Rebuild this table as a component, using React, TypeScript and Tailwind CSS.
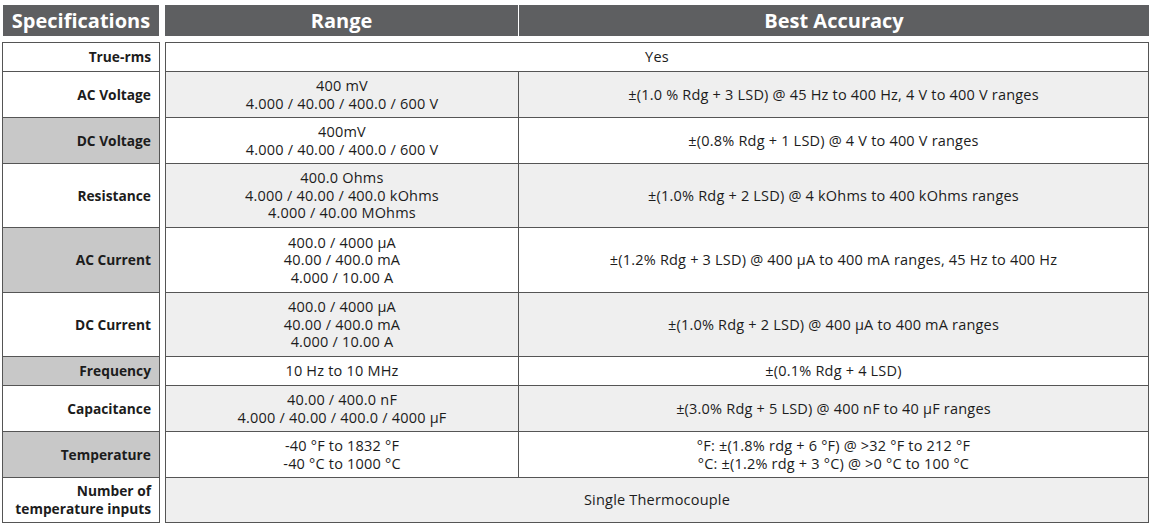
import React from 'react'

type Row = {
    label: React.ReactNode
    range?: string[]
    accuracy?: string[]
    span?: string
    h: string
    leftBg: string
    rightBg: string
}

const rows: Row[] = [
    { label: 'True-rms', span: 'Yes', h: 'h-[30px] border-t', leftBg: 'bg-white', rightBg: 'bg-white' },
    { label: 'AC Voltage', range: ['400 mV', '4.000 / 40.00 / 400.0 / 600 V'], accuracy: ['±(1.0 % Rdg + 3 LSD) @ 45 Hz to 400 Hz, 4 V to 400 V ranges'], h: 'h-[46px]', leftBg: 'bg-white', rightBg: 'bg-[#efefef]' },
    { label: 'DC Voltage', range: ['400mV', '4.000 / 40.00 / 400.0 / 600 V'], accuracy: ['±(0.8% Rdg + 1 LSD) @ 4 V to 400 V ranges'], h: 'h-[46px]', leftBg: 'bg-[#c8c8c8]', rightBg: 'bg-white' },
    { label: 'Resistance', range: ['400.0 Ohms', '4.000 / 40.00 / 400.0 kOhms', '4.000 / 40.00 MOhms'], accuracy: ['±(1.0% Rdg + 2 LSD) @ 4 kOhms to 400 kOhms ranges'], h: 'h-[64px]', leftBg: 'bg-white', rightBg: 'bg-[#efefef]' },
    { label: 'AC Current', range: ['400.0 / 4000 µA', '40.00 / 400.0 mA', '4.000 / 10.00 A'], accuracy: ['±(1.2% Rdg + 3 LSD) @ 400 µA to 400 mA ranges, 45 Hz to 400 Hz'], h: 'h-[65px]', leftBg: 'bg-[#c8c8c8]', rightBg: 'bg-white' },
    { label: 'DC Current', range: ['400.0 / 4000 µA', '40.00 / 400.0 mA', '4.000 / 10.00 A'], accuracy: ['±(1.0% Rdg + 2 LSD) @ 400 µA to 400 mA ranges'], h: 'h-[64px]', leftBg: 'bg-white', rightBg: 'bg-[#efefef]' },
    { label: 'Frequency', range: ['10 Hz to 10 MHz'], accuracy: ['±(0.1% Rdg + 4 LSD)'], h: 'h-[29px]', leftBg: 'bg-[#c8c8c8]', rightBg: 'bg-white' },
    { label: 'Capacitance', range: ['40.00 / 400.0 nF', '4.000 / 40.00 / 400.0 / 4000 µF'], accuracy: ['±(3.0% Rdg + 5 LSD) @ 400 nF to 40 µF ranges'], h: 'h-[46px]', leftBg: 'bg-white', rightBg: 'bg-[#efefef]' },
    { label: 'Temperature', range: ['-40 °F to 1832 °F', '-40 °C to 1000 °C'], accuracy: ['°F: ±(1.8% rdg + 6 °F) @ >32 °F to 212 °F', '°C: ±(1.2% rdg + 3 °C) @ >0 °C to 100 °C'], h: 'h-[46px]', leftBg: 'bg-[#c8c8c8]', rightBg: 'bg-white' },
    { label: <>Number of<br />temperature inputs</>, span: 'Single Thermocouple', h: 'h-[45px]', leftBg: 'bg-white', rightBg: 'bg-[#efefef]' },
]

const Lines = ({ lines }: { lines: string[] }) => (
    <div className='flex flex-col items-center leading-[17.5px]'>
        {lines.map((l, i) => <span key={i}>{l}</span>)}
    </div>
)

export default function App() {
    return (
        <div
            className='w-[1157px] h-[527px] bg-white pt-[5px] pl-[2px] text-[#1c1c1c]'
            style={{ fontFamily: '"Open Sans", "Noto Sans", Arial, sans-serif' }}>

            {/* header */}
            <div className='flex h-[31px] text-white font-bold text-[20px]'>
                <div className='ml-[1px] w-[156px] bg-[#5e5f61] flex items-center justify-center'>Specifications</div>
                <div className='w-[6px]' />
                <div className='w-[353px] bg-[#5e5f61] flex items-center justify-center'>Range</div>
                <div className='w-[1px] bg-white' />
                <div className='w-[630px] bg-[#5e5f61] flex items-center justify-center'>Best Accuracy</div>
            </div>

            {/* body */}
            <div className='mt-[6px] flex flex-col text-[14.5px] tracking-[0.2px]'>
                {rows.map((r, i) => (
                    <div key={i} className='flex'>
                        <div className={`${r.h} ${r.leftBg} w-[158px] border-x border-b border-[#555] flex items-center justify-end text-right pr-[8px] font-bold text-[13.75px] tracking-normal leading-[18px]`}>
                            <div>{r.label}</div>
                        </div>
                        <div className='w-[5px]' />
                        {r.span ? (
                            <div className={`${r.h} ${r.rightBg} w-[984px] border-x border-b border-[#555] flex items-center justify-center`}>
                                {r.span}
                            </div>
                        ) : (
                            <>
                                <div className={`${r.h} ${r.rightBg} w-[353px] border-l border-b border-[#555] flex items-center justify-center`}>
                                    <Lines lines={r.range!} />
                                </div>
                                <div className={`${r.h} ${r.rightBg} w-[631px] border-x border-b border-[#555] flex items-center justify-center`}>
                                    <Lines lines={r.accuracy!} />
                                </div>
                            </>
                        )}
                    </div>
                ))}
            </div>
        </div>
    )
}
